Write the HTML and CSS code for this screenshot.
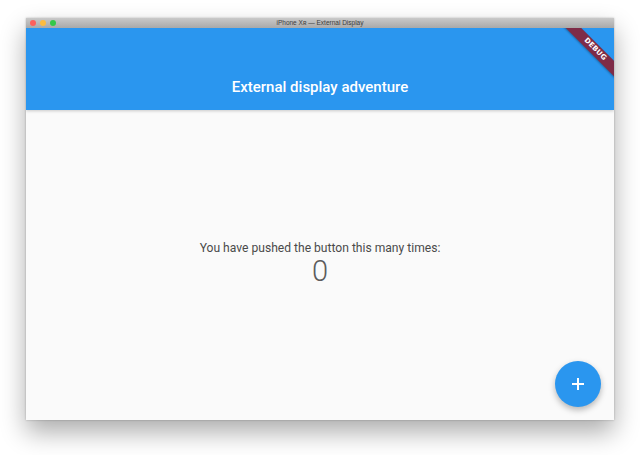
FILE: index.html
```html
<!DOCTYPE html>
<html>
<head>
<meta charset="utf-8">
<link rel="stylesheet" href="styles.css">
</head>
<body>
<div class="window">
  <div class="titlebar">
    <div class="lights">
      <span class="light red"></span>
      <span class="light yellow"></span>
      <span class="light green"></span>
    </div>
    <div class="wintitle">iPhone Xʀ — External Display</div>
  </div>
  <div class="app">
    <div class="appbar">
      <div class="apptitle">External display adventure</div>
    </div>
    <div class="content">
      <div class="msg">You have pushed the button this many times:</div>
      <div class="count">0</div>
    </div>
    <button class="fab" aria-label="Increment">
      <svg width="14" height="14" viewBox="0 0 14 14"><path d="M7 1v12M1 7h12" stroke="#fff" stroke-width="2" fill="none"/></svg>
    </button>
    <div class="banner-clip">
      <div class="banner">DEBUG</div>
    </div>
  </div>
</div>
</body>
</html>
```

FILE: styles.css
```css
html, body {
  margin: 0;
  padding: 0;
  background: #ffffff;
  width: 640px;
  height: 455px;
  overflow: hidden;
}
.window {
  margin: 18px 0 0 26px;
  width: 588px;
  height: 402px;
  display: flex;
  flex-direction: column;
  box-shadow: 0 12px 24px rgba(0,0,0,0.33), 0 0 2px rgba(0,0,0,0.25);
}
.titlebar {
  height: 10px;
  flex: 0 0 10px;
  background: linear-gradient(#c9c9c9, #a9a9a9);
  display: flex;
  align-items: center;
  justify-content: center;
  position: relative;
}
.lights {
  position: absolute;
  left: 4px;
  top: 2px;
  display: flex;
  gap: 4px;
}
.light {
  width: 6px;
  height: 6px;
  border-radius: 50%;
  display: block;
}
.red { background: #fc605c; }
.yellow { background: #fdbc40; }
.green { background: #34c84a; }
.wintitle {
  font-family: "Liberation Sans", Arial, sans-serif;
  font-size: 6.5px;
  color: #3c3c3c;
  line-height: 10px;
}
.app {
  flex: 1;
  display: flex;
  flex-direction: column;
  position: relative;
  overflow: hidden;
  background: #fafafa;
}
.appbar {
  height: 82px;
  flex: 0 0 82px;
  background: #2a96ef;
  display: flex;
  align-items: flex-end;
  justify-content: center;
  box-shadow: 0 1px 3px rgba(0,0,0,0.2);
  position: relative;
  z-index: 1;
}
.apptitle {
  font-family: Roboto, "Noto Sans", sans-serif;
  font-weight: 500;
  font-size: 15px;
  color: #ffffff;
  line-height: 20px;
  margin-bottom: 13px;
}
.content {
  flex: 1;
  display: flex;
  flex-direction: column;
  align-items: center;
  justify-content: center;
  padding-bottom: 4px;
  font-family: Roboto, "Noto Sans", sans-serif;
}
.msg {
  font-size: 12.1px;
  color: #4a4a4a;
  line-height: 16px;
}
.count {
  font-size: 29px;
  font-weight: 300;
  color: #5c5c5c;
  line-height: 30px;
}
.fab {
  position: absolute;
  right: 13px;
  bottom: 13px;
  width: 46px;
  height: 46px;
  border-radius: 50%;
  border: none;
  padding: 0;
  background: #2a96ef;
  box-shadow: 0 3px 6px rgba(0,0,0,0.28);
  display: flex;
  align-items: center;
  justify-content: center;
}
.banner-clip {
  position: absolute;
  top: 0;
  right: 0;
  width: 60px;
  height: 60px;
  overflow: hidden;
  z-index: 2;
}
.banner {
  position: absolute;
  left: -1px;
  top: 16px;
  width: 84px;
  height: 11px;
  background: #7e2b47;
  color: #fff;
  font-family: "DejaVu Sans", sans-serif;
  font-weight: bold;
  font-size: 7px;
  line-height: 11px;
  text-align: center;
  letter-spacing: 0.2px;
  transform: rotate(45deg);
  transform-origin: 50% 50%;
  box-shadow: 0 1px 2px rgba(0,0,0,0.3);
}
```
